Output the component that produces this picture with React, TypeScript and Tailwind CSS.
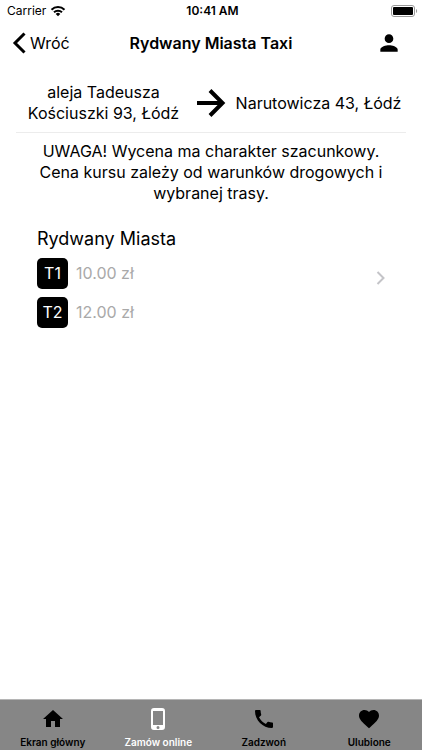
import React from "react";

const HOME = "M10 20v-6h4v6h5v-8h3L12 3 2 12h3v8z";
const PHONE =
  "M16 1H8a3 3 0 0 0-3 3v16a3 3 0 0 0 3 3h8a3 3 0 0 0 3-3V4a3 3 0 0 0-3-3zm-4 21a1.500 1.500 0 1 1 0-3 1.500 1.500 0 0 1 0 3zm5-4H7V4h10v14z";
const CALL =
  "M20.010 15.380c-1.230 0-2.420-.2-3.530-.56a.977.977 0 0 0-1.010.24l-1.570 1.970c-2.830-1.350-5.480-3.900-6.890-6.830l1.950-1.660c.27-.28.35-.67.24-1.020-.37-1.110-.56-2.300-.56-3.530 0-.54-.45-.99-.99-.99H4.190C3.650 3 3 3.240 3 3.990 3 13.280 10.730 21 20.010 21c.71 0 .99-.63.99-1.180v-3.450c0-.54-.45-.99-.99-.99z";
const HEART =
  "M12 21.350l-1.450-1.320C5.400 15.360 2 12.280 2 8.500 2 5.420 4.420 3 7.500 3c1.740 0 3.410.81 4.500 2.090C13.090 3.810 14.760 3 16.500 3 19.580 3 22 5.420 22 8.500c0 3.780-3.400 6.860-8.550 11.540L12 21.350z";

const tabs = [
  { label: "Ekran główny", icon: HOME, active: false },
  { label: "Zamów online", icon: PHONE, active: true },
  { label: "Zadzwoń", icon: CALL, active: false },
  { label: "Ulubione", icon: HEART, active: false },
];

const tariffs = [
  { code: "T1", price: "10.00 zł" },
  { code: "T2", price: "12.00 zł" },
];

function Glyph({ d, className }: { d: string; className: string }) {
  return (
    <svg viewBox="0 0 24 24" fill="currentColor" className={className} aria-hidden="true">
      <path d={d} />
    </svg>
  );
}

function StatusBar() {
  return (
    <div className="grid h-[22px] grid-cols-3 items-center pr-1 pl-[7px] text-[12px] leading-4">
      <div className="flex items-center gap-1">
        <span>Carrier</span>
        <svg viewBox="0 0 16 12" className="h-3 w-4" fill="none" stroke="currentColor" strokeWidth="2" aria-hidden="true">
          <path d="M1.500 4.700a9.300 9.300 0 0 1 13 0" />
          <path d="M4 7.300a5.700 5.700 0 0 1 8 0" />
          <path d="M8 11.300L5.700 9a3.200 3.200 0 0 1 4.600 0z" fill="currentColor" stroke="none" />
        </svg>
      </div>
      <span className="text-center font-semibold">10:41 AM</span>
      <svg viewBox="0 0 27 12" className="h-3 w-[27px] justify-self-end" aria-hidden="true">
        <rect x="0.500" y="0.500" width="23" height="11" rx="2.500" fill="none" stroke="#999" />
        <rect x="2" y="2" width="20" height="8" rx="1" />
        <path d="M25 4v4c1.500-.6 1.500-3.400 0-4z" fill="#999" />
      </svg>
    </div>
  );
}

export default function App() {
  return (
    <div className="flex min-h-screen flex-col bg-white font-['Inter','Liberation_Sans',sans-serif] text-black">
      <StatusBar />
      <header className="grid h-[42px] grid-cols-[1fr_auto_1fr] items-center px-3">
        <button className="flex items-center gap-1 justify-self-start text-[16px] leading-5">
          <svg viewBox="0 0 14 22" className="h-[22px] w-[14px]" fill="none" stroke="currentColor" strokeWidth="3" aria-hidden="true">
            <path d="M12.500 1.500L3 11l9.500 9.500" />
          </svg>
          Wróć
        </button>
        <h1 className="text-[16px] leading-5 font-semibold">Rydwany Miasta Taxi</h1>
        <button aria-label="Profil" className="justify-self-end pr-2">
          <Glyph
            d="M12 12c2.210 0 4-1.790 4-4s-1.790-4-4-4-4 1.790-4 4 1.790 4 4 4zm0 2c-2.670 0-8 1.340-8 4v2h16v-2c0-2.660-5.330-4-8-4z"
            className="size-[26px]"
          />
        </button>
      </header>

      <main className="flex-1 px-4 pt-[18px] text-[16px] leading-[21px]">
        <section className="flex items-center border-b border-[#ececec] pb-2 text-center">
          <p className="flex-1">aleja Tadeusza Kościuszki 93, Łódź</p>
          <svg viewBox="0 0 40 40" className="size-10 shrink-0" fill="none" stroke="currentColor" strokeWidth="4" aria-hidden="true">
            <path d="M6 20h25" />
            <path d="M19 7.500L31.500 20 19 32.500" />
          </svg>
          <p className="flex-1 whitespace-nowrap">Narutowicza 43, Łódź</p>
        </section>

        <p className="px-4 pt-2 text-center">
          UWAGA! Wycena ma charakter szacunkowy. Cena kursu zależy od warunków drogowych i wybranej trasy.
        </p>

        <button className="mt-6 flex w-full items-center justify-between px-[21px] text-left">
          <span className="flex flex-col gap-2">
            <span className="text-[18px] leading-[22px]">Rydwany Miasta</span>
            {tariffs.map((t) => (
              <span key={t.code} className="flex items-center gap-2 text-[#a9a9a9]">
                <span className="flex size-[31px] items-center justify-center rounded-[5px] bg-black text-white">
                  {t.code}
                </span>
                {t.price}
              </span>
            ))}
          </span>
          <svg viewBox="0 0 9 14" className="h-[14px] w-[9px]" fill="none" stroke="#c4c4c8" strokeWidth="2" aria-hidden="true">
            <path d="M1.500 1l6 6-6 6" />
          </svg>
        </button>
      </main>

      <nav className="grid h-[51px] grid-cols-4 border-t border-[#b5b5b5] bg-[#868686]">
        {tabs.map((tab) => (
          <a
            key={tab.label}
            href="#"
            aria-current={tab.active ? "page" : undefined}
            className={
              "flex flex-col items-center gap-[3px] pt-[7px] text-[10px] leading-4 font-semibold " +
              (tab.active ? "text-white" : "text-black")
            }
          >
            <Glyph d={tab.icon} className="size-6" />
            {tab.label}
          </a>
        ))}
      </nav>
    </div>
  );
}
